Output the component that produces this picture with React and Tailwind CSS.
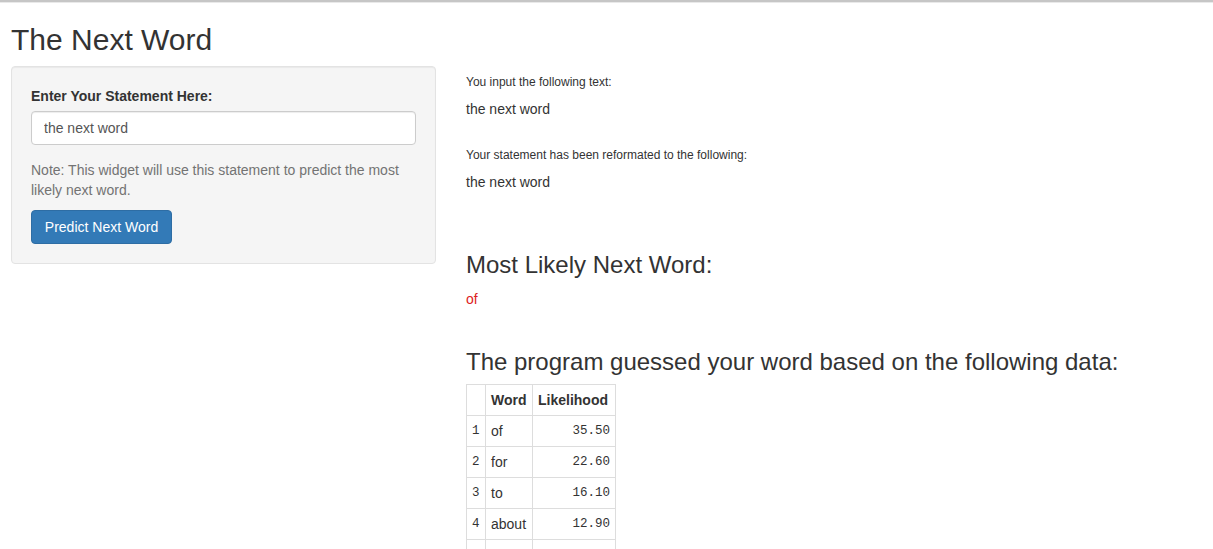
import React from "react";

const rows = [
  ["1", "of", "35.50"],
  ["2", "for", "22.60"],
  ["3", "to", "16.10"],
  ["4", "about", "12.90"],
];

const mono = { fontFamily: '"Liberation Mono", "DejaVu Sans Mono", monospace' };

export default function App() {
  return (
    <div className="min-h-screen bg-white text-[#333] text-[14px] leading-[20px]" style={{ fontFamily: '"Liberation Sans", Arial, Helvetica, sans-serif' }}>
      <div className="h-[2px] bg-[#c6c6c6]" />
      <div className="h-px bg-[#e9e9e9]" />
      <div className="pl-[11px]">
        <h2 className="mt-[20px] mb-[10px] text-[30px] leading-[33px] font-normal text-[#333]">The Next Word</h2>
        <div className="flex items-start">
          <div className="w-[425px] shrink-0 bg-[#f5f5f5] border border-[#e3e3e3] rounded-[4px] p-[19px] shadow-[inset_0_1px_1px_rgba(0,0,0,0.05)]">
            <label className="block font-bold mb-[5px]">Enter Your Statement Here:</label>
            <input
              type="text"
              defaultValue="the next word"
              className="block w-full h-[34px] px-[12px] py-[6px] bg-white border border-[#ccc] rounded-[4px] text-[14px] text-[#555] shadow-[inset_0_1px_1px_rgba(0,0,0,0.075)] outline-none"
            />
            <p className="mt-[15px] mb-[10px] text-[#737373]">Note: This widget will use this statement to predict the most likely next word.</p>
            <button className="h-[34px] w-[141px] bg-[#337ab7] border border-[#2e6da4] rounded-[4px] text-white text-[14px]">Predict Next Word</button>
          </div>
          <div className="ml-[30px] flex-1">
            <h6 className="mt-[10px] mb-[10px] text-[12px] leading-[13.2px] font-normal">You input the following text:</h6>
            <div>the next word</div>
            <div className="h-[20px]" />
            <h6 className="mt-[10px] mb-[10px] text-[12px] leading-[13.2px] font-normal">Your statement has been reformated to the following:</h6>
            <div>the next word</div>
            <div className="h-[40px]" />
            <h3 className="mt-[20px] mb-[10px] text-[24px] leading-[26.4px] font-normal">Most Likely Next Word:</h3>
            <div className="text-[#dd2222]">of</div>
            <div className="h-[20px]" />
            <h3 className="mt-[20px] mb-[9px] text-[24px] leading-[26.4px] font-normal">The program guessed your word based on the following data:</h3>
            <table className="border-collapse border border-[#ddd]">
              <thead>
                <tr>
                  <th className="border border-[#ddd] p-[5px]"><div className="min-w-[8px]" /></th>
                  <th className="border border-[#ddd] p-[5px] text-left font-bold"><div className="min-w-[36px]">Word</div></th>
                  <th className="border border-[#ddd] p-[5px] text-left font-bold"><div className="min-w-[72px]">Likelihood</div></th>
                </tr>
              </thead>
              <tbody>
                {rows.map((r) => (
                  <tr key={r[0]}>
                    <td className="border border-[#ddd] p-[5px] text-[12.5px]" style={mono}>{r[0]}</td>
                    <td className="border border-[#ddd] p-[5px]">{r[1]}</td>
                    <td className="border border-[#ddd] p-[5px] text-right text-[12.5px]" style={mono}>{r[2]}</td>
                  </tr>
                ))}
                <tr>
                  <td className="border border-[#ddd] p-[5px]"><div className="h-[20px]" /></td>
                  <td className="border border-[#ddd] p-[5px]"><div className="h-[20px]" /></td>
                  <td className="border border-[#ddd] p-[5px]"><div className="h-[20px]" /></td>
                </tr>
              </tbody>
            </table>
          </div>
        </div>
      </div>
    </div>
  );
}
